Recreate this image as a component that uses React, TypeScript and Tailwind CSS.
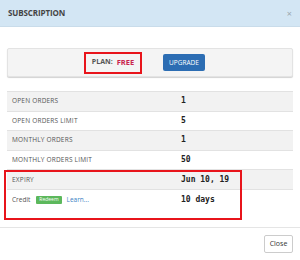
import React from 'react';

const ROWS = [
  { label: 'OPEN ORDERS', value: '1', shaded: true },
  { label: 'OPEN ORDERS LIMIT', value: '5', shaded: false },
  { label: 'MONTHLY ORDERS', value: '1', shaded: true },
  { label: 'MONTHLY ORDERS LIMIT', value: '50', shaded: false },
];

function Row({ label, value, shaded }: { label: string; value: string; shaded: boolean }) {
  return (
    <div
      className={`flex items-center h-[19.5px] border-t border-[#e2e2e2] ${shaded ? 'bg-[#f2f2f2]' : 'bg-white'}`}
    >
      <span className="w-[174px] pl-[5px] text-[6.5px] text-[#555] tracking-[0.2px]">{label}</span>
      <span className="font-['DejaVu_Sans_Mono',monospace] font-bold text-[8px] text-[#222]">{value}</span>
    </div>
  );
}

export default function App() {
  return (
    <div className="w-[300px] h-[260px] bg-white font-['Open_Sans',sans-serif] overflow-hidden">
      {/* Header */}
      <div className="h-[27px] bg-[#d3e6f4] flex items-center justify-between pl-[8px] pr-[8px] border-b border-[#c9dcea]">
        <span className="text-[8px] font-bold text-[#444] tracking-[-0.1px]">SUBSCRIPTION</span>
        <span className="text-[9px] leading-none text-[#9aa6ae]">×</span>
      </div>

      {/* Body */}
      <div className="px-[7px] pt-[21px] h-[200px]">
        {/* Plan well */}
        <div className="h-[29px] bg-[#f4f4f4] border border-[#e3e3e3] rounded-[2px] shadow-[0_1px_1px_rgba(0,0,0,0.18)] flex items-center pl-[76px] gap-[21px]">
          <div className="h-[22px] w-[58px] border-2 border-[#e8141b] flex items-center justify-center gap-[4px]">
            <span className="text-[7px] font-bold text-[#555]">PLAN:</span>
            <span className="text-[7.5px] font-bold text-[#c9254e]">FREE</span>
          </div>
          <div className="h-[17px] w-[42px] bg-[#2c6db3] rounded-[2px] flex items-center justify-center text-[6.5px] text-white">
            UPGRADE
          </div>
        </div>

        {/* Table */}
        <div className="mt-[14px]">
          {ROWS.map((r) => (
            <Row key={r.label} {...r} />
          ))}
          <div className="relative">
            <div className="flex items-center h-[20px] border-t border-[#e2e2e2] bg-[#f2f2f2]">
              <span className="w-[174px] pl-[5px] text-[6.5px] text-[#555] tracking-[0.2px]">EXPIRY</span>
              <span className="font-['DejaVu_Sans_Mono',monospace] font-bold text-[8px] text-[#222]">Jun 10, 19</span>
            </div>
            <div className="flex items-center h-[21px] border-t border-[#e2e2e2] bg-white">
              <div className="w-[174px] pl-[5px] flex items-center">
                <span className="text-[6.5px] text-[#555]">Credit</span>
                <span className="ml-[6px] h-[8px] px-[3px] bg-[#5cb85c] rounded-[1px] text-[5px] text-white flex items-center">Redeem</span>
                <span className="ml-[5px] text-[6.5px] text-[#3b7fc4]">Learn...</span>
              </div>
              <span className="font-['DejaVu_Sans_Mono',monospace] font-bold text-[8px] text-[#222]">10 days</span>
            </div>
            <div className="absolute left-[-3px] top-[1px] w-[238px] h-[50px] border-2 border-[#e8141b]" />
          </div>
        </div>
      </div>

      {/* Footer */}
      <div className="border-t border-[#e5e5e5] flex justify-end px-[7px] pt-[7px]">
        <div className="h-[18px] w-[29px] border border-[#ccc] rounded-[2px] bg-white flex items-center justify-center text-[7px] text-[#333]">
          Close
        </div>
      </div>
    </div>
  );
}
